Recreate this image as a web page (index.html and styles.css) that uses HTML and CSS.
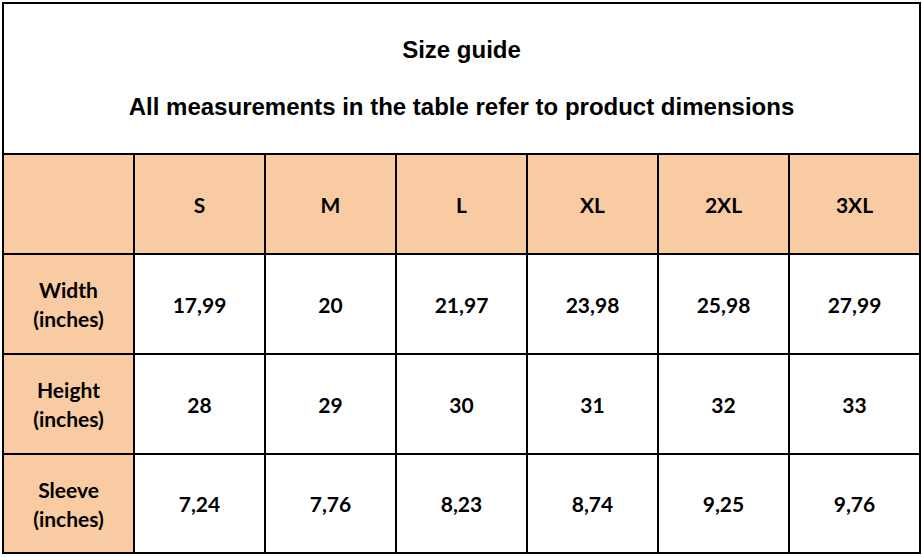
FILE: index.html
```html
<!DOCTYPE html>
<html lang="en">
<head>
<meta charset="utf-8">
<title>Size guide</title>
<link rel="stylesheet" href="styles.css">
</head>
<body>
<div class="sheet">
  <div class="title">
    <div class="title-line">Size guide</div>
    <div class="title-line">All measurements in the table refer to product dimensions</div>
  </div>
  <div class="cell head"></div>
  <div class="cell head">S</div>
  <div class="cell head">M</div>
  <div class="cell head">L</div>
  <div class="cell head">XL</div>
  <div class="cell head">2XL</div>
  <div class="cell head">3XL</div>

  <div class="cell head label">Width<br>(inches)</div>
  <div class="cell">17,99</div>
  <div class="cell">20</div>
  <div class="cell">21,97</div>
  <div class="cell">23,98</div>
  <div class="cell">25,98</div>
  <div class="cell">27,99</div>

  <div class="cell head label">Height<br>(inches)</div>
  <div class="cell">28</div>
  <div class="cell">29</div>
  <div class="cell">30</div>
  <div class="cell">31</div>
  <div class="cell">32</div>
  <div class="cell">33</div>

  <div class="cell head label">Sleeve<br>(inches)</div>
  <div class="cell">7,24</div>
  <div class="cell">7,76</div>
  <div class="cell">8,23</div>
  <div class="cell">8,74</div>
  <div class="cell">9,25</div>
  <div class="cell">9,76</div>
</div>
</body>
</html>
```

FILE: styles.css
```css
html, body {
  margin: 0;
  padding: 0;
  background: #ffffff;
}
body {
  padding: 2px 0 0 2px;
}
.sheet {
  display: grid;
  grid-template-columns: repeat(7, 129px);
  grid-template-rows: 149px 98px 98px 98px 97px;
  gap: 2px;
  padding: 2px;
  background: #000000;
  width: max-content;
}
.title {
  grid-column: 1 / -1;
  background: #ffffff;
  display: flex;
  flex-direction: column;
  align-items: center;
  padding-top: 29px;
  gap: 23px;
  font-family: "Liberation Sans", Arial, sans-serif;
  font-weight: bold;
  font-size: 24px;
  line-height: 34px;
  color: #000;
}
.cell {
  background: #ffffff;
  display: flex;
  align-items: center;
  justify-content: center;
  text-align: center;
  font-family: Lato, "Open Sans", sans-serif;
  font-weight: bold;
  font-size: 21px;
  line-height: 29px;
  color: #000;
}
.head {
  background: #f8cba2;
}
```
